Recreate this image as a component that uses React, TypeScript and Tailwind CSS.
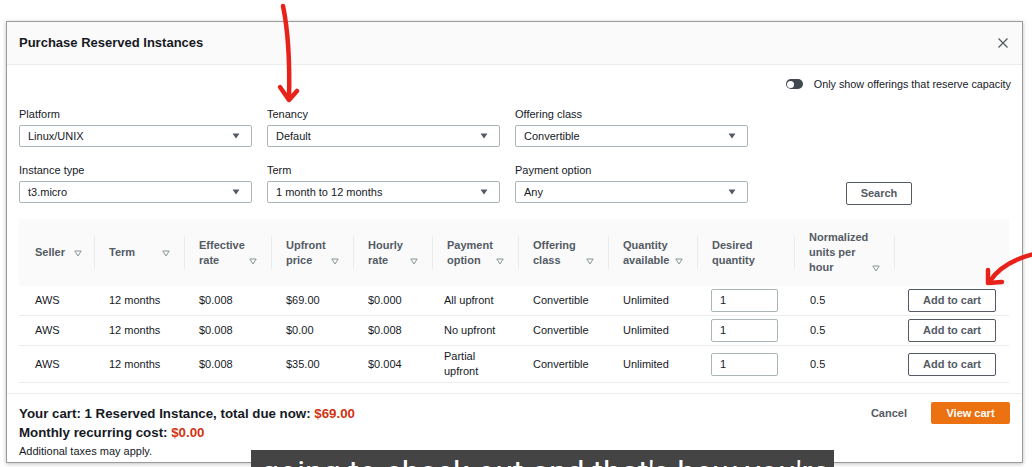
import React from "react";

const font = { fontFamily: '"Liberation Sans", Arial, sans-serif' };

function Caret() {
  return (
    <svg width="8" height="6" viewBox="0 0 8 6" className="shrink-0">
      <path d="M0.5 0.5 L7.5 0.5 L4 5.5 Z" fill="#545b64" />
    </svg>
  );
}

function SortIcon() {
  return (
    <svg width="8" height="7" viewBox="0 0 8 7" className="shrink-0 mb-[3px]">
      <path d="M0.8 1 L7.2 1 L4 6 Z" fill="none" stroke="#879596" strokeWidth="1" strokeLinejoin="round" />
    </svg>
  );
}

function SelectField({ label, value, className = "" }: { label: string; value: string; className?: string }) {
  return (
    <div className={"w-[233px] " + className}>
      <div className="h-[14px] text-[11px] leading-[14px] text-[#16191f]">{label}</div>
      <div className="mt-[4px] h-[22px] border border-[#aab7b8] rounded-[2px] bg-white flex items-center justify-between pl-[8px] pr-[11px] text-[11px] text-[#16191f]">
        <span>{value}</span>
        <Caret />
      </div>
    </div>
  );
}

interface Col {
  lines: string[];
  w: string;
  sort: boolean;
}

const cols: Col[] = [
  { lines: ["Seller"], w: "w-[75px]", sort: true },
  { lines: ["Term"], w: "w-[90px]", sort: true },
  { lines: ["Effective", "rate"], w: "w-[87px]", sort: true },
  { lines: ["Upfront", "price"], w: "w-[82px]", sort: true },
  { lines: ["Hourly", "rate"], w: "w-[79px]", sort: true },
  { lines: ["Payment", "option"], w: "w-[86px]", sort: true },
  { lines: ["Offering", "class"], w: "w-[90px]", sort: true },
  { lines: ["Quantity", "available"], w: "w-[89px]", sort: true },
  { lines: ["Desired", "quantity"], w: "w-[97px]", sort: false },
  { lines: ["Normalized", "units per", "hour"], w: "w-[100px]", sort: true },
  { lines: [], w: "flex-1", sort: false },
];

const rows = [
  { up: "$69.00", hr: "$0.000", pay: ["All upfront"] },
  { up: "$0.00", hr: "$0.008", pay: ["No upfront"] },
  { up: "$35.00", hr: "$0.004", pay: ["Partial", "upfront"] },
];

export default function App() {
  return (
    <div className="relative w-[1032px] h-[467px] overflow-hidden bg-white" style={font}>
      <div className="ml-[6px] mt-[21px] w-[1017px] h-[442px] border border-[#9a9a9a] bg-white shadow-[0_1px_4px_rgba(0,0,0,0.25)] flex flex-col">
        {/* Header */}
        <div className="h-[43px] shrink-0 bg-[#fafafa] border-b border-[#eaeded] flex items-center justify-between pl-[12px] pr-[14px]">
          <span className="text-[13px] font-bold text-[#16191f]">Purchase Reserved Instances</span>
          <svg width="10" height="10" viewBox="0 0 10 10">
            <path d="M0.5 0.5 L9.5 9.5 M9.5 0.5 L0.5 9.5" stroke="#545b64" strokeWidth="1.3" />
          </svg>
        </div>

        {/* Body */}
        <div className="flex-1 pl-[12px] pr-[13px]">
          <div className="h-[38px] flex items-center justify-end gap-[11px] mr-[-2px]">
            <div className="w-[17px] h-[10px] rounded-full bg-[#414750] flex items-center pl-[1.5px]">
              <div className="w-[7px] h-[7px] rounded-full bg-white" />
            </div>
            <span className="text-[10.8px] text-[#16191f]">Only show offerings that reserve capacity</span>
          </div>

          <div className="mt-[4px] flex gap-[15px]">
            <SelectField label="Platform" value="Linux/UNIX" />
            <SelectField label="Tenancy" value="Default" />
            <SelectField label="Offering class" value="Convertible" />
          </div>
          <div className="mt-[16px] flex gap-[15px] items-end">
            <SelectField label="Instance type" value="t3.micro" />
            <SelectField label="Term" value="1 month to 12 months" />
            <SelectField label="Payment option" value="Any" />
            <button className="ml-[83px] mb-[-2px] w-[66px] h-[23px] border border-[#545b64] rounded-[2px] bg-white text-[11px] font-bold text-[#545b64]">
              Search
            </button>
          </div>

          {/* Table */}
          <div className="mt-[16px] w-[990px]">
            <div className="flex h-[67px] bg-[#fafafa]">
              {cols.map((c, i) => (
                <div
                  key={i}
                  className={"relative h-full flex items-center pl-[15px] pr-[14px] " + c.w + (i === 0 ? " pl-[16px]" : "")}
                >
                  {i > 0 && <span className="absolute left-0 top-[17px] h-[33px] w-px bg-[#e9ebed]" />}
                  {c.lines.length > 0 && (
                    <div className={"flex items-end w-full " + (i === 0 ? "gap-[9px]" : "justify-between")}>
                      <div className="text-[11px] leading-[15px] font-bold text-[#545b64]">
                        {c.lines.map((l, j) => (
                          <div key={j} className="whitespace-nowrap">{l}</div>
                        ))}
                      </div>
                      {c.sort && <SortIcon />}
                    </div>
                  )}
                </div>
              ))}
            </div>

            {rows.map((r, i) => (
              <div key={i} className="flex items-center border-b border-[#eaeded] py-[3px] text-[11px] leading-[15px] text-[#16191f]">
                <div className="w-[75px] pl-[16px]">AWS</div>
                <div className="w-[90px] pl-[15px]">12 months</div>
                <div className="w-[87px] pl-[15px]">$0.008</div>
                <div className="w-[82px] pl-[15px]">{r.up}</div>
                <div className="w-[79px] pl-[15px]">{r.hr}</div>
                <div className="w-[86px] pl-[12px]">
                  {r.pay.map((p, j) => (
                    <div key={j}>{p}</div>
                  ))}
                </div>
                <div className="w-[90px] pl-[15px]">Convertible</div>
                <div className="w-[89px] pl-[15px]">Unlimited</div>
                <div className="w-[97px] pl-[14px]">
                  <div className="w-[67px] h-[23px] border border-[#aab7b8] rounded-[2px] flex items-center pl-[8px]">1</div>
                </div>
                <div className="w-[100px] pl-[16px]">0.5</div>
                <div className="flex-1 pl-[14px]">
                  <button className="w-[88px] h-[23px] border border-[#545b64] rounded-[2px] bg-white font-bold text-[#545b64]">
                    Add to cart
                  </button>
                </div>
              </div>
            ))}
          </div>
        </div>

        {/* Footer */}
        <div className="h-[69px] shrink-0 border-t border-[#eaeded] flex justify-between pl-[12px] pr-[12px] pt-[10px]">
          <div className="text-[#16191f]">
            <div className="text-[13.3px] leading-[19px] font-bold">
              Your cart: 1 Reserved Instance, total due now: <span className="text-[#d13212]">$69.00</span>
            </div>
            <div className="text-[13.3px] leading-[19px] font-bold">
              Monthly recurring cost: <span className="text-[#d13212]">$0.00</span>
            </div>
            <div className="text-[11px] leading-[19px]">Additional taxes may apply.</div>
          </div>
          <div className="flex items-start gap-[24px] mt-[-2px]">
            <span className="h-[22px] flex items-center text-[11px] font-bold text-[#545b64]">Cancel</span>
            <button className="w-[79px] h-[22px] rounded-[2px] bg-[#ec7211] text-[11px] font-bold text-white">View cart</button>
          </div>
        </div>
      </div>

      {/* Annotation arrows */}
      <svg className="absolute left-0 top-0 pointer-events-none" width="1032" height="467">
        <g fill="none" stroke="#e8221b" strokeWidth="4.5" strokeLinecap="round" strokeLinejoin="round">
          <path d="M283 6 C288 30 290 60 289 99" />
          <path d="M280 87 L289 100 L297 91" />
          <path d="M1034 254 C1018 258 1000 266 990 281" />
          <path d="M988 270 L988 283 L1002 282" />
        </g>
      </svg>

      {/* Video caption */}
      <div className="absolute left-[251px] top-[450px] w-[583px] h-[30px] bg-[#444444] pl-[10px] pt-[6px] overflow-hidden">
        <div className="text-[32px] leading-[32px] text-white whitespace-nowrap" style={{ fontFamily: 'Roboto, "Liberation Sans", sans-serif' }}>
          going to check out and that's how you're
        </div>
      </div>
    </div>
  );
}
